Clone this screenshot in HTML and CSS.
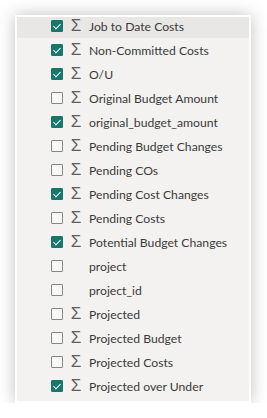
FILE: index.html
```html
<!DOCTYPE html>
<html lang="en">
<head>
    <meta charset="UTF-8">
    <meta name="viewport" content="width=device-width, initial-scale=1.0">
    <title>Fields</title>
    <link rel="stylesheet" href="styles.css">
</head>
<body>
    <div class="panel">
        <ul class="fields">
            <li class="field hover"><span class="box on"></span><span class="sigma">&Sigma;</span><span class="name">Job to Date Costs</span></li>
            <li class="field"><span class="box on"></span><span class="sigma">&Sigma;</span><span class="name">Non-Committed Costs</span></li>
            <li class="field"><span class="box on"></span><span class="sigma">&Sigma;</span><span class="name">O/U</span></li>
            <li class="field"><span class="box"></span><span class="sigma">&Sigma;</span><span class="name">Original Budget Amount</span></li>
            <li class="field"><span class="box on"></span><span class="sigma">&Sigma;</span><span class="name">original_budget_amount</span></li>
            <li class="field"><span class="box"></span><span class="sigma">&Sigma;</span><span class="name">Pending Budget Changes</span></li>
            <li class="field"><span class="box"></span><span class="sigma">&Sigma;</span><span class="name">Pending COs</span></li>
            <li class="field"><span class="box on"></span><span class="sigma">&Sigma;</span><span class="name">Pending Cost Changes</span></li>
            <li class="field"><span class="box"></span><span class="sigma">&Sigma;</span><span class="name">Pending Costs</span></li>
            <li class="field"><span class="box on"></span><span class="sigma">&Sigma;</span><span class="name">Potential Budget Changes</span></li>
            <li class="field"><span class="box"></span><span class="sigma"></span><span class="name">project</span></li>
            <li class="field"><span class="box"></span><span class="sigma"></span><span class="name">project_id</span></li>
            <li class="field"><span class="box"></span><span class="sigma">&Sigma;</span><span class="name">Projected</span></li>
            <li class="field"><span class="box"></span><span class="sigma">&Sigma;</span><span class="name">Projected Budget</span></li>
            <li class="field"><span class="box"></span><span class="sigma">&Sigma;</span><span class="name">Projected Costs</span></li>
            <li class="field"><span class="box on"></span><span class="sigma">&Sigma;</span><span class="name">Projected over Under</span></li>
        </ul>
    </div>
</body>
</html>
```

FILE: styles.css
```css
body {
    margin: 0;
    background: #ffffff;
    font-family: "Lato", "Open Sans", sans-serif;
}
.panel {
    margin: 15px 0 0 15px;
    width: 232px;
    height: 384px;
    border: 2px solid #ffffff;
    background: #f3f2f1;
    box-shadow: 0 0 16px rgba(0, 0, 0, 0.25);
    overflow: hidden;
}
.fields {
    list-style: none;
    margin: -3px 0 0 0;
    padding: 0;
}
.field {
    display: flex;
    align-items: center;
    height: 24px;
    padding-left: 34px;
    color: #3b3a39;
    font-size: 12.2px;
}
.field.hover {
    background: #e8e7e6;
}
.box {
    box-sizing: border-box;
    width: 12px;
    height: 12px;
    border: 1px solid #8a8886;
    border-radius: 1px;
    background: #f8f8f8;
    position: relative;
}
.box.on {
    background: #17776a;
    border-color: #17776a;
}
.box.on::after {
    content: "";
    position: absolute;
    left: 3px;
    top: 1px;
    width: 3px;
    height: 6px;
    border: solid #ffffff;
    border-width: 0 1.5px 1.5px 0;
    transform: rotate(45deg);
}
.sigma {
    width: 12px;
    margin-left: 7px;
    margin-right: 7px;
    font-family: "Liberation Sans", sans-serif;
    font-size: 17px;
    line-height: 1;
    color: #605e5c;
    text-align: center;
    margin-top: -1px;
}
.name {
    white-space: nowrap;
}
```
